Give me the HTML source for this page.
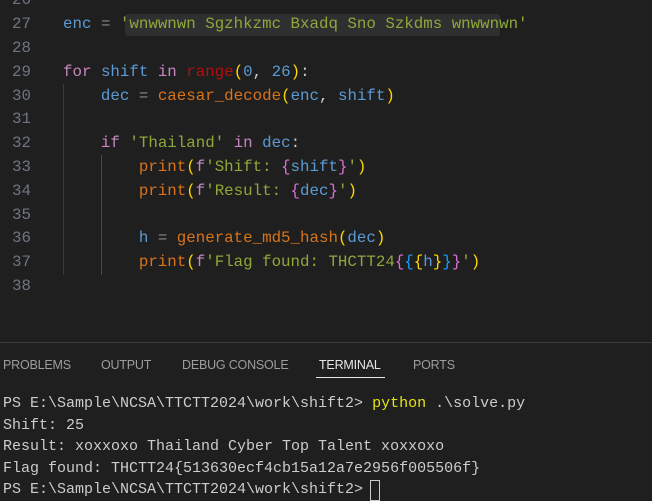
<!DOCTYPE html>
<html><head><meta charset="utf-8"><style>
html,body{margin:0;padding:0;width:652px;height:498px;background:#1f1f1f;overflow:hidden}
.ed{position:absolute;left:0;top:0;width:652px;height:342px;font-family:"Liberation Mono",monospace;font-size:15.8px}
.ln{position:absolute;left:0;width:31px;text-align:right;color:#6e7681;height:24px;line-height:24px}
.cl{position:absolute;left:63px;white-space:pre;color:#cccccc;height:24px;line-height:24px}
.k{color:#c586c0}.v{color:#5b9bd5}.f{color:#d8741c}.s{color:#8ea83a}.r{color:#b01010}.n{color:#5b9bd5}
.y{color:#ffd700}.p{color:#da70d6}.b{color:#179fff}.o{color:#8a8a8a}.w{color:#cccccc}
.guide{position:absolute;width:1px;background:#404040}
.strbg{position:absolute;left:125px;top:14px;width:375px;height:22px;background:#2d2f31;border-radius:3px}
.panel{position:absolute;left:0;top:342px;width:652px;height:156px;border-top:1px solid #3c3c3c;background:#1f1f1f}
.tab{position:absolute;top:15px;font-family:"Liberation Sans",sans-serif;font-size:12.5px;color:#9d9d9d;letter-spacing:-0.2px;white-space:nowrap}
.term{position:absolute;left:3px;font-family:"Liberation Mono",monospace;font-size:15px;color:#cccccc;white-space:pre;line-height:21.5px}
</style></head><body>
<div class="ed">
<div class="strbg"></div>
<div class="guide" style="left:63px;top:84px;height:191px;background:#3a3a3a"></div>
<div class="guide" style="left:101px;top:155px;height:120px;background:#4a4a3a"></div>
<div class="ln" style="top:-12px">26</div>
<div class="ln" style="top:12px">27</div>
<div class="ln" style="top:36px">28</div>
<div class="ln" style="top:60px">29</div>
<div class="ln" style="top:84px">30</div>
<div class="ln" style="top:107px">31</div>
<div class="ln" style="top:131px">32</div>
<div class="ln" style="top:155px">33</div>
<div class="ln" style="top:179px">34</div>
<div class="ln" style="top:203px">35</div>
<div class="ln" style="top:226px">36</div>
<div class="ln" style="top:250px">37</div>
<div class="ln" style="top:274px">38</div>

<div class="cl" style="top:12px"><span class="v">enc</span> <span class="o">=</span> <span class="s">'wnwwnwn Sgzhkzmc Bxadq Sno Szkdms wnwwnwn'</span></div>
<div class="cl" style="top:60px"><span class="k">for</span> <span class="v">shift</span> <span class="k">in</span> <span class="r">range</span><span class="y">(</span><span class="n">0</span><span class="w">, </span><span class="n">26</span><span class="y">)</span><span class="w">:</span></div>
<div class="cl" style="top:84px">    <span class="v">dec</span> <span class="o">=</span> <span class="f">caesar_decode</span><span class="y">(</span><span class="v">enc</span><span class="w">, </span><span class="v">shift</span><span class="y">)</span></div>
<div class="cl" style="top:131px">    <span class="k">if</span> <span class="s">'Thailand'</span> <span class="k">in</span> <span class="v">dec</span><span class="w">:</span></div>
<div class="cl" style="top:155px">        <span class="f">print</span><span class="y">(</span><span class="k">f</span><span class="s">'Shift: </span><span class="p">{</span><span class="v">shift</span><span class="p">}</span><span class="s">'</span><span class="y">)</span></div>
<div class="cl" style="top:179px">        <span class="f">print</span><span class="y">(</span><span class="k">f</span><span class="s">'Result: </span><span class="p">{</span><span class="v">dec</span><span class="p">}</span><span class="s">'</span><span class="y">)</span></div>
<div class="cl" style="top:226px">        <span class="v">h</span> <span class="o">=</span> <span class="f">generate_md5_hash</span><span class="y">(</span><span class="v">dec</span><span class="y">)</span></div>
<div class="cl" style="top:250px">        <span class="f">print</span><span class="y">(</span><span class="k">f</span><span class="s">'Flag found: THCTT24</span><span class="p">{</span><span class="b">{</span><span class="y">{</span><span class="v">h</span><span class="y">}</span><span class="b">}</span><span class="p">}</span><span class="s">'</span><span class="y">)</span></div>
</div>
<div class="panel">
<div class="tab" style="left:3px">PROBLEMS</div>
<div class="tab" style="left:101px">OUTPUT</div>
<div class="tab" style="left:182px">DEBUG CONSOLE</div>
<div class="tab" style="left:319px;color:#e7e7e7">TERMINAL</div>
<div class="tab" style="left:413px">PORTS</div>
<div style="position:absolute;left:316px;top:34px;width:69px;height:1px;background:#e7e7e7"></div>
<div class="term" style="top:50px">PS E:\Sample\NCSA\TTCTT2024\work\shift2> <span style="color:#e5e510">python</span> .\solve.py
Shift: 25
Result: xoxxoxo Thailand Cyber Top Talent xoxxoxo
Flag found: THCTT24{513630ecf4cb15a12a7e2956f005506f}
PS E:\Sample\NCSA\TTCTT2024\work\shift2> </div>
<div style="position:absolute;left:370px;top:137px;width:8px;height:19px;border:1px solid #cccccc"></div>
</div>
</body></html>
